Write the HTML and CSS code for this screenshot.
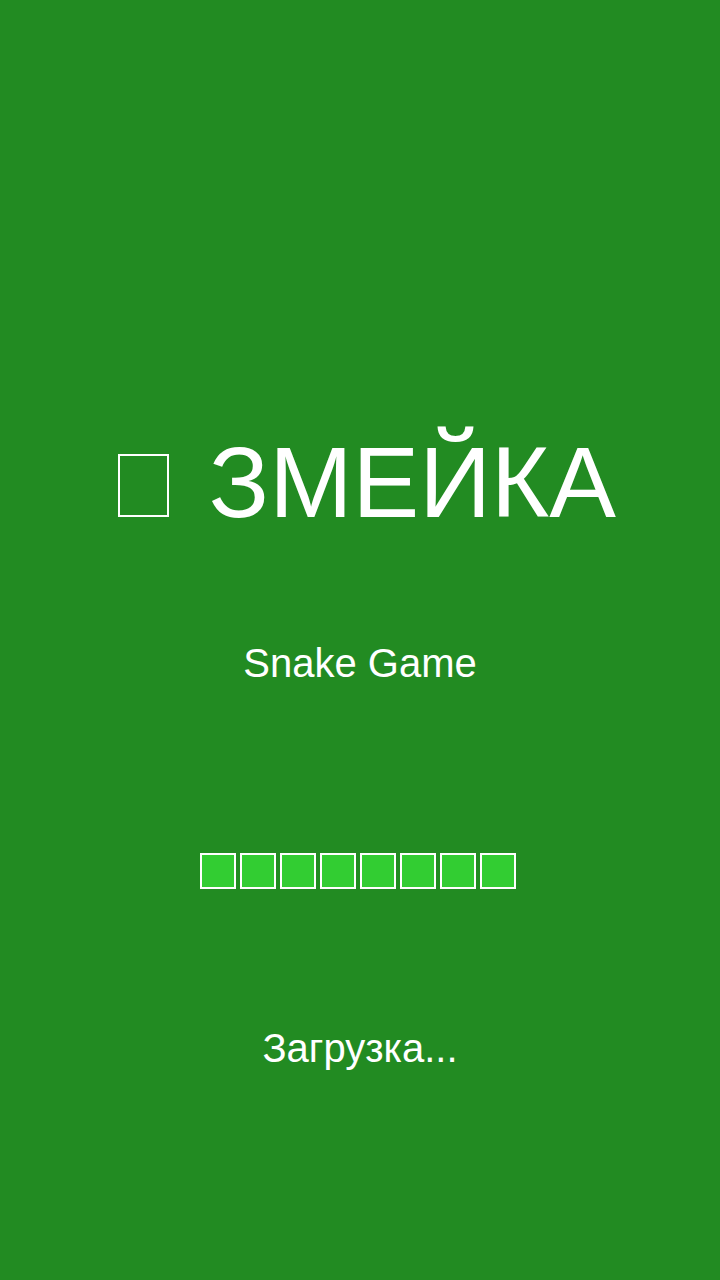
FILE: index.html
```html
<!DOCTYPE html>
<html lang="ru">
<head>
<meta charset="utf-8">
<title>Змейка</title>
<link rel="stylesheet" href="styles.css">
</head>
<body>
<main class="screen">
  <h1 class="title"><span class="missing-glyph" role="img" aria-label="🐍"></span> ЗМЕЙКА</h1>
  <p class="subtitle">Snake Game</p>
  <div class="loader">
    <span class="cell"></span>
    <span class="cell"></span>
    <span class="cell"></span>
    <span class="cell"></span>
    <span class="cell"></span>
    <span class="cell"></span>
    <span class="cell"></span>
    <span class="cell"></span>
  </div>
  <p class="loading">Загрузка...</p>
</main>
</body>
</html>
```
FILE: styles.css
```css
html, body {
  margin: 0;
  padding: 0;
  background: #228b22;
}

.screen {
  box-sizing: border-box;
  min-height: 100vh;
  display: flex;
  flex-direction: column;
  align-items: center;
  padding-top: 425px;
  color: #ffffff;
  font-family: "Liberation Sans", Arial, sans-serif;
}

.title {
  margin: 0;
  font-size: 100px;
  font-weight: normal;
  line-height: 115px;
  white-space: nowrap;
}

.missing-glyph {
  display: inline-block;
  box-sizing: border-box;
  width: 51px;
  height: 63px;
  margin: 0 12px 0 14px;
  border: 2px solid #ffffff;
  vertical-align: baseline;
}

.subtitle {
  margin: 100px 0 0;
  font-size: 40px;
  line-height: 46px;
}

.loader {
  margin-top: 167px;
  display: flex;
}

.cell {
  box-sizing: border-box;
  width: 36px;
  height: 36px;
  margin-right: 4px;
  background: #32cd32;
  border: 2px solid #ffffff;
}

.loading {
  margin: 136px 0 0;
  font-size: 40px;
  line-height: 46px;
}
```
